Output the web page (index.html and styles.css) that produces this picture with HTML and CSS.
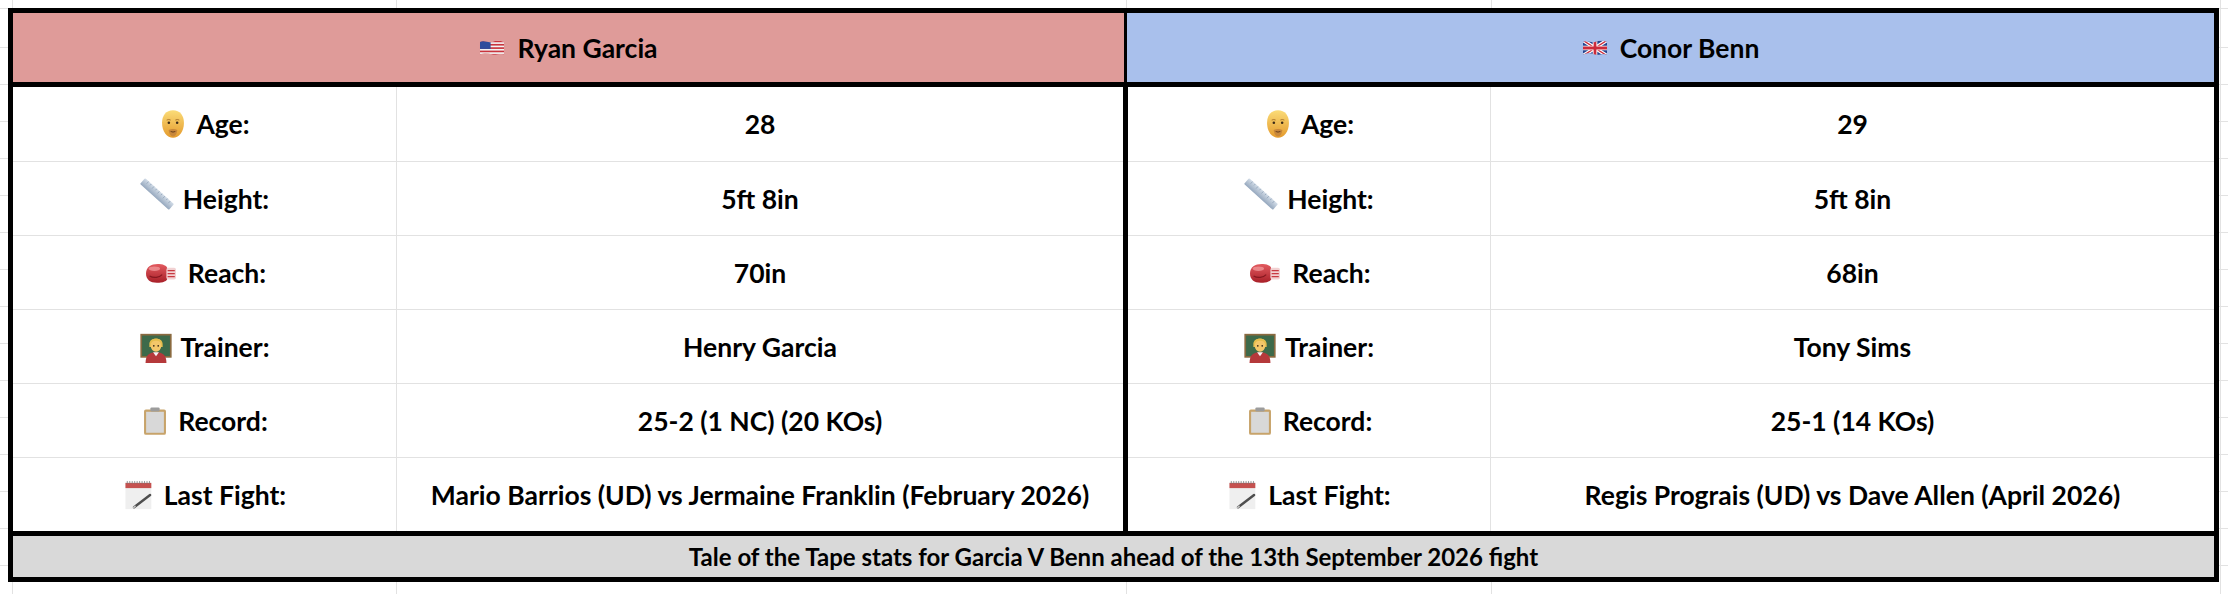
FILE: index.html
```html
<!DOCTYPE html>
<html lang="en">
<head>
<meta charset="utf-8">
<title>Tale of the Tape – Garcia v Benn</title>
<link rel="stylesheet" href="styles.css">
</head>
<body>
<svg class="sprite" aria-hidden="true">
  <defs>
    <linearGradient id="g-face" x1="0" y1="0" x2="0" y2="1">
      <stop offset="0" stop-color="#fbdc78"/>
      <stop offset="1" stop-color="#e49a2c"/>
    </linearGradient>
    <linearGradient id="g-ruler" x1="0" y1="0" x2="0" y2="1">
      <stop offset="0" stop-color="#d3dde8"/>
      <stop offset="1" stop-color="#96a8be"/>
    </linearGradient>
    <linearGradient id="g-glove" x1="0" y1="0" x2="0" y2="1">
      <stop offset="0" stop-color="#e25a5f"/>
      <stop offset="1" stop-color="#a81f28"/>
    </linearGradient>
    <clipPath id="c-wave">
      <path d="M1 3.5 C6 1.5 10 5 14 3.5 S22 1.5 27 3.5 V17 C22 15 18 18.5 14 17 S6 15 1 17 Z"/>
    </clipPath>
  </defs>
  <symbol id="i-us" viewBox="0 0 28 20">
    <g clip-path="url(#c-wave)">
      <rect width="28" height="20" fill="#f3f3f3"/>
      <rect y="2" width="28" height="1.8" fill="#c9343d"/>
      <rect y="5.6" width="28" height="1.8" fill="#c9343d"/>
      <rect y="9.2" width="28" height="1.8" fill="#c9343d"/>
      <rect y="12.8" width="28" height="1.8" fill="#c9343d"/>
      <rect y="16.4" width="28" height="1.8" fill="#c9343d"/>
      <rect width="12.5" height="11" fill="#2f4c9c"/>
    </g>
  </symbol>
  <symbol id="i-uk" viewBox="0 0 28 20">
    <g clip-path="url(#c-wave)">
      <rect width="28" height="20" fill="#26448f"/>
      <path d="M0 1 L28 19 M28 1 L0 19" stroke="#fff" stroke-width="4"/>
      <path d="M0 1 L28 19 M28 1 L0 19" stroke="#cc2b3b" stroke-width="1.4"/>
      <path d="M14 0 V20 M0 10 H28" stroke="#fff" stroke-width="5"/>
      <path d="M14 0 V20 M0 10 H28" stroke="#cc2b3b" stroke-width="3"/>
    </g>
  </symbol>
  <symbol id="i-face" viewBox="0 0 24 26">
    <path d="M12 1 C18 1 21.5 5.5 21.5 12 C21.5 20 17 25 12 25 C7 25 2.5 20 2.5 12 C2.5 5.5 6 1 12 1Z" fill="url(#g-face)"/>
    <path d="M6.5 9.6 Q8.4 8.6 10 9.6 M14 9.6 Q15.6 8.6 17.5 9.6" stroke="#a8742a" stroke-width="0.8" fill="none"/>
    <circle cx="8.4" cy="12" r="1.1" fill="#3b2a18"/>
    <circle cx="15.6" cy="12" r="1.1" fill="#3b2a18"/>
    <path d="M8.2 18.2 Q12 16.4 15.8 18.2 Q15 23.5 12 23.8 Q9 23.5 8.2 18.2Z" fill="#c8873a"/>
    <path d="M10 19.4 Q12 20.4 14 19.4" stroke="#5a3416" stroke-width="0.9" fill="none"/>
  </symbol>
  <symbol id="i-ruler" viewBox="0 0 28 28">
    <g transform="rotate(42 14 14)">
      <rect x="-2" y="10.8" width="32" height="6.4" rx="0.8" fill="url(#g-ruler)"/>
      <path d="M2 11 V13.4 M5 11 V12.6 M8 11 V13.4 M11 11 V12.6 M14 11 V13.4 M17 11 V12.6 M20 11 V13.4 M23 11 V12.6 M26 11 V13.4" stroke="#8397ae" stroke-width="0.5"/>
    </g>
  </symbol>
  <symbol id="i-glove" viewBox="0 0 30 20">
    <path d="M2.5 10.5 C2.5 4.5 7.5 2.2 13.5 2.6 C18 2.9 20.5 4.8 20.5 7.2 L20.5 14 C20.5 17 16.5 18.2 11.5 18.2 C6 18.2 2.5 15.6 2.5 10.5Z" fill="url(#g-glove)"/>
    <ellipse cx="9.5" cy="6.4" rx="4.8" ry="1.9" fill="#f19a9c" opacity="0.75"/>
    <path d="M5.5 12.5 C9 14.6 13.5 13.8 16 11.4" stroke="#861820" stroke-width="1" fill="none"/>
    <rect x="19.5" y="5.6" width="8" height="9.8" rx="1.6" fill="#f2d1d2"/>
    <path d="M20.5 8 H26.5 M20.5 10.5 H26.5 M20.5 13 H26.5" stroke="#c83a42" stroke-width="0.9"/>
  </symbol>
  <symbol id="i-teacher" viewBox="0 0 26 26">
    <rect x="1" y="3" width="24" height="18" fill="#3d6a4a" stroke="#8a6a40" stroke-width="1.4"/>
    <path d="M7.6 11 C7.2 4.5 18.8 4.5 18.4 11 L18.4 13 L7.6 13Z" fill="#e6be4e"/>
    <ellipse cx="13" cy="12" rx="4.3" ry="4.8" fill="#f4c76a"/>
    <path d="M8.8 9.6 C10 7.4 16 7.4 17.2 9.6 L17.2 8 C15 5.6 11 5.6 8.8 8Z" fill="#e6be4e"/>
    <circle cx="11.2" cy="12" r="0.7" fill="#3b2a18"/>
    <circle cx="14.8" cy="12" r="0.7" fill="#3b2a18"/>
    <path d="M4.5 26 C4.5 19 8 17.2 13 17.2 C18 17.2 21.5 19 21.5 26Z" fill="#b5393b"/>
    <path d="M10.6 17.3 L13 20.5 L15.4 17.3Z" fill="#f4f4f4"/>
  </symbol>
  <symbol id="i-clip" viewBox="0 0 24 26">
    <rect x="2.5" y="3" width="19" height="22" rx="1.6" fill="#c7a36a"/>
    <rect x="4.3" y="5" width="15.4" height="18.2" fill="#d8d8d8"/>
    <rect x="8" y="1.2" width="8" height="3.6" rx="1" fill="#9c9c9c"/>
  </symbol>
  <symbol id="i-memo" viewBox="0 0 26 26">
    <rect x="2" y="2.5" width="21" height="22" fill="#efefef"/>
    <rect x="2" y="3.2" width="21" height="4.2" fill="#c5514f"/>
    <path d="M3.5 1.6 V4 M5.5 1.6 V4 M7.5 1.6 V4 M9.5 1.6 V4 M11.5 1.6 V4 M13.5 1.6 V4 M15.5 1.6 V4 M17.5 1.6 V4 M19.5 1.6 V4 M21.5 1.6 V4" stroke="#777" stroke-width="0.6"/>
    <path d="M9 23 L22 13" stroke="#4e4e4e" stroke-width="2" stroke-linecap="round"/>
    <path d="M8.2 23.6 L10.2 21.8" stroke="#bdbdbd" stroke-width="1.4"/>
  </symbol>
</svg>

<div class="tape">
  <div class="head">
    <div class="head-cell red"><svg class="flag"><use href="#i-us"/></svg><span>Ryan Garcia</span></div>
    <div class="head-cell blue"><svg class="flag"><use href="#i-uk"/></svg><span>Conor Benn</span></div>
  </div>
  <div class="body">
    <div class="side left">
      <div class="row"><div class="lab"><svg class="ico face"><use href="#i-face"/></svg><span>Age:</span></div><div class="val">28</div></div>
      <div class="row"><div class="lab"><svg class="ico ruler"><use href="#i-ruler"/></svg><span>Height:</span></div><div class="val">5ft 8in</div></div>
      <div class="row"><div class="lab"><svg class="ico glove"><use href="#i-glove"/></svg><span>Reach:</span></div><div class="val">70in</div></div>
      <div class="row"><div class="lab"><svg class="ico teacher"><use href="#i-teacher"/></svg><span>Trainer:</span></div><div class="val">Henry Garcia</div></div>
      <div class="row"><div class="lab"><svg class="ico clip"><use href="#i-clip"/></svg><span>Record:</span></div><div class="val">25-2 (1 NC) (20 KOs)</div></div>
      <div class="row"><div class="lab"><svg class="ico memo"><use href="#i-memo"/></svg><span>Last Fight:</span></div><div class="val">Mario Barrios (UD) vs Jermaine Franklin (February 2026)</div></div>
    </div>
    <div class="side right">
      <div class="row"><div class="lab"><svg class="ico face"><use href="#i-face"/></svg><span>Age:</span></div><div class="val">29</div></div>
      <div class="row"><div class="lab"><svg class="ico ruler"><use href="#i-ruler"/></svg><span>Height:</span></div><div class="val">5ft 8in</div></div>
      <div class="row"><div class="lab"><svg class="ico glove"><use href="#i-glove"/></svg><span>Reach:</span></div><div class="val">68in</div></div>
      <div class="row"><div class="lab"><svg class="ico teacher"><use href="#i-teacher"/></svg><span>Trainer:</span></div><div class="val">Tony Sims</div></div>
      <div class="row"><div class="lab"><svg class="ico clip"><use href="#i-clip"/></svg><span>Record:</span></div><div class="val">25-1 (14 KOs)</div></div>
      <div class="row"><div class="lab"><svg class="ico memo"><use href="#i-memo"/></svg><span>Last Fight:</span></div><div class="val">Regis Prograis (UD) vs Dave Allen (April 2026)</div></div>
    </div>
  </div>
  <div class="foot">Tale of the Tape stats for Garcia V Benn ahead of the 13th September 2026 fight</div>
</div>
</body>
</html>
```

FILE: styles.css
```css
* { box-sizing: border-box; }

html, body { margin: 0; padding: 0; }

body {
  width: 2228px;
  height: 594px;
  overflow: hidden;
  background-color: #fff;
  background-image:
    linear-gradient(#e2e2e2, #e2e2e2),
    linear-gradient(#e2e2e2, #e2e2e2),
    linear-gradient(#e2e2e2, #e2e2e2),
    linear-gradient(#e2e2e2, #e2e2e2),
    linear-gradient(#e2e2e2, #e2e2e2),
    repeating-linear-gradient(to bottom, transparent 0 36px, #e2e2e2 36px 37px);
  background-size: 1px 100%, 1px 100%, 1px 100%, 1px 100%, 1px 100%, 100% 100%;
  background-position: 12px 0, 396px 0, 1126px 0, 1491px 0, 2220px 0, 0 11px;
  background-repeat: no-repeat, no-repeat, no-repeat, no-repeat, no-repeat, repeat;
  font-family: Lato, "Liberation Sans", Arial, sans-serif;
  font-weight: 700;
  font-size: 26.5px;
  color: #000;
}

.sprite {
  display: block;
  width: 0;
  height: 0;
  overflow: hidden;
}

.tape {
  margin: 8px 0 0 8px;
  width: 2211px;
  border: 5px solid #000;
  background: #fff;
}

.head {
  display: grid;
  grid-template-columns: 1111px 1090px;
  height: 74px;
  border-bottom: 5px solid #000;
}

.head-cell {
  display: flex;
  align-items: center;
  justify-content: center;
  gap: 12px;
}

.red { background: #df9b99; }
.blue { background: #a9c0ec; border-left: 3px solid #000; }

.flag { width: 26px; height: 20px; flex: none; }

.body {
  display: grid;
  grid-template-columns: 1110px 1091px;
}

.side { display: flex; flex-direction: column; }
.side.right { border-left: 5px solid #000; }

.row {
  display: grid;
  height: 74px;
  border-top: 1px solid #e2e2e2;
}
.row:first-child { border-top: 0; }

.left .row { grid-template-columns: 383px 727px; }
.right .row { grid-template-columns: 362px 724px; }

.lab, .val {
  display: flex;
  align-items: center;
  justify-content: center;
  white-space: nowrap;
}

.lab { gap: 9px; }
.val { border-left: 1px solid #e2e2e2; }

.ico { flex: none; }
.face { width: 28px; height: 30px; }
.ruler { width: 34px; height: 34px; margin-top: -10px; }
.glove { width: 36px; height: 24px; }
.teacher { width: 32px; height: 32px; }
.clip { width: 28px; height: 30px; }
.memo { width: 32px; height: 32px; }

.foot {
  height: 46px;
  border-top: 5px solid #000;
  background: #d9d9d9;
  display: flex;
  align-items: center;
  justify-content: center;
  white-space: nowrap;
  font-size: 24px;
}
```
